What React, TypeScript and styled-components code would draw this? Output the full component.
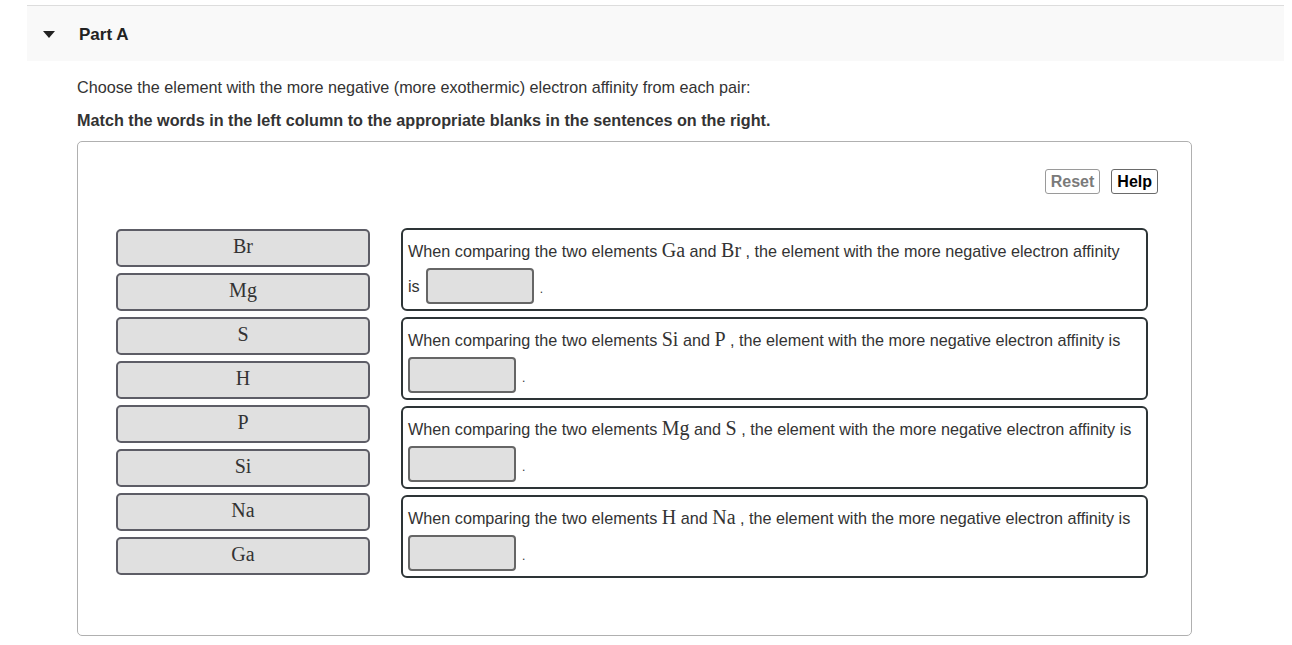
import styled, { createGlobalStyle } from "styled-components";

const Global = createGlobalStyle`
body {
    margin: 0;
    background: #ffffff;
    font-family: "Liberation Sans", Arial, sans-serif;
    color: #333333;
}
`

const tiles = ["Br", "Mg", "S", "H", "P", "Si", "Na", "Ga"];

const sentences = [
    { a: "Ga", b: "Br", wrapIs: true },
    { a: "Si", b: "P", wrapIs: false },
    { a: "Mg", b: "S", wrapIs: false },
    { a: "H", b: "Na", wrapIs: false },
];

function App(){
    return(
        <>
        <Global />
        <Page>
            <Header>
                <Caret />
                <PartTitle>Part A</PartTitle>
            </Header>
            <Body>
                <Intro>Choose the element with the more negative (more exothermic) electron affinity from each pair:</Intro>
                <Instruction>Match the words in the left column to the appropriate blanks in the sentences on the right.</Instruction>
                <Panel>
                    <Toolbar>
                        <ToolButton $muted>Reset</ToolButton>
                        <ToolButton>Help</ToolButton>
                    </Toolbar>
                    <Columns>
                        <TileList>
                            {tiles.map(t => <Tile key={t}>{t}</Tile>)}
                        </TileList>
                        <SentenceList>
                            {sentences.map(s => (
                                <SentenceBox key={s.a}>
                                    <Line>
                                        When comparing the two elements <Sym>{s.a}</Sym> and <Sym>{s.b}</Sym> , the element with the more negative electron affinity{s.wrapIs ? "" : " is"}
                                    </Line>
                                    <AnswerLine>
                                        {s.wrapIs && <span>is</span>}
                                        <Blank />
                                        <Dot>.</Dot>
                                    </AnswerLine>
                                </SentenceBox>
                            ))}
                        </SentenceList>
                    </Columns>
                </Panel>
            </Body>
        </Page>
        </>
    );
}

const Page = styled.div`
padding: 5px 8px 0 27px;
`

const Header = styled.div`
display: flex;
align-items: center;
width: 1257px;
height: 56px;
border-top: 1px solid #dddddd;
background: #f9f9f9;
padding-left: 16px;
box-sizing: border-box;
`

const Caret = styled.div`
width: 0;
height: 0;
border-left: 6.5px solid transparent;
border-right: 6.5px solid transparent;
border-top: 7px solid #222222;
margin-top: 1px;
`

const PartTitle = styled.div`
margin-left: 24px;
padding-top: 3px;
font-weight: bold;
font-size: 17px;
color: #222222;
`

const Body = styled.div`
padding-left: 50px;
`

const Intro = styled.div`
margin-top: 16px;
font-size: 16.2px;
line-height: 20px;
color: #333333;
`

const Instruction = styled.div`
margin-top: 13px;
font-size: 16.2px;
line-height: 20px;
font-weight: bold;
color: #333333;
`

const Panel = styled.div`
margin-top: 11px;
width: 1115px;
height: 495px;
box-sizing: border-box;
border: 1px solid #b0b0b0;
border-radius: 5px;
padding: 27px 33px 0 38px;
`

const Toolbar = styled.div`
display: flex;
justify-content: flex-end;
gap: 11px;
`

const ToolButton = styled.div<{ $muted?: boolean }>`
height: 25px;
box-sizing: border-box;
padding: 0 5px;
display: flex;
align-items: center;
font-size: 16px;
font-weight: bold;
color: ${p => p.$muted ? "#7a7a7a" : "#000000"};
border: 1px solid ${p => p.$muted ? "#9a9a9a" : "#6a6a6a"};
border-radius: 3px;
background: #ffffff;
`

const Columns = styled.div`
display: flex;
gap: 31px;
margin-top: 34px;
`

const TileList = styled.div`
display: flex;
flex-direction: column;
gap: 6px;
margin-top: 1px;
`

const Tile = styled.div`
width: 254px;
height: 38px;
box-sizing: border-box;
border: 2px solid #5d5d66;
border-radius: 5px;
background: #e0e0e0;
display: flex;
justify-content: center;
align-items: center;
padding-bottom: 3px;
font-family: "Liberation Serif", "Times New Roman", serif;
font-size: 20px;
color: #333333;
`

const SentenceList = styled.div`
display: flex;
flex-direction: column;
gap: 6px;
`

const SentenceBox = styled.div`
width: 747px;
height: 83px;
box-sizing: border-box;
border: 2px solid #2d3436;
border-radius: 6px;
padding: 8px 6px 0 5px;
font-size: 16.2px;
color: #333333;
`

const Line = styled.div`
line-height: 24px;
white-space: nowrap;
`

const Sym = styled.span`
font-family: "Liberation Serif", "Times New Roman", serif;
font-size: 20px;
color: #333333;
`

const AnswerLine = styled.div`
display: flex;
align-items: center;
gap: 6px;
margin-top: 5px;
`

const Blank = styled.div`
width: 108px;
height: 36px;
box-sizing: border-box;
border: 2px solid #666666;
border-radius: 4px;
background: #e0e0e0;
`

const Dot = styled.span`
font-size: 12px;
margin-top: 6px;
`

export default App;
